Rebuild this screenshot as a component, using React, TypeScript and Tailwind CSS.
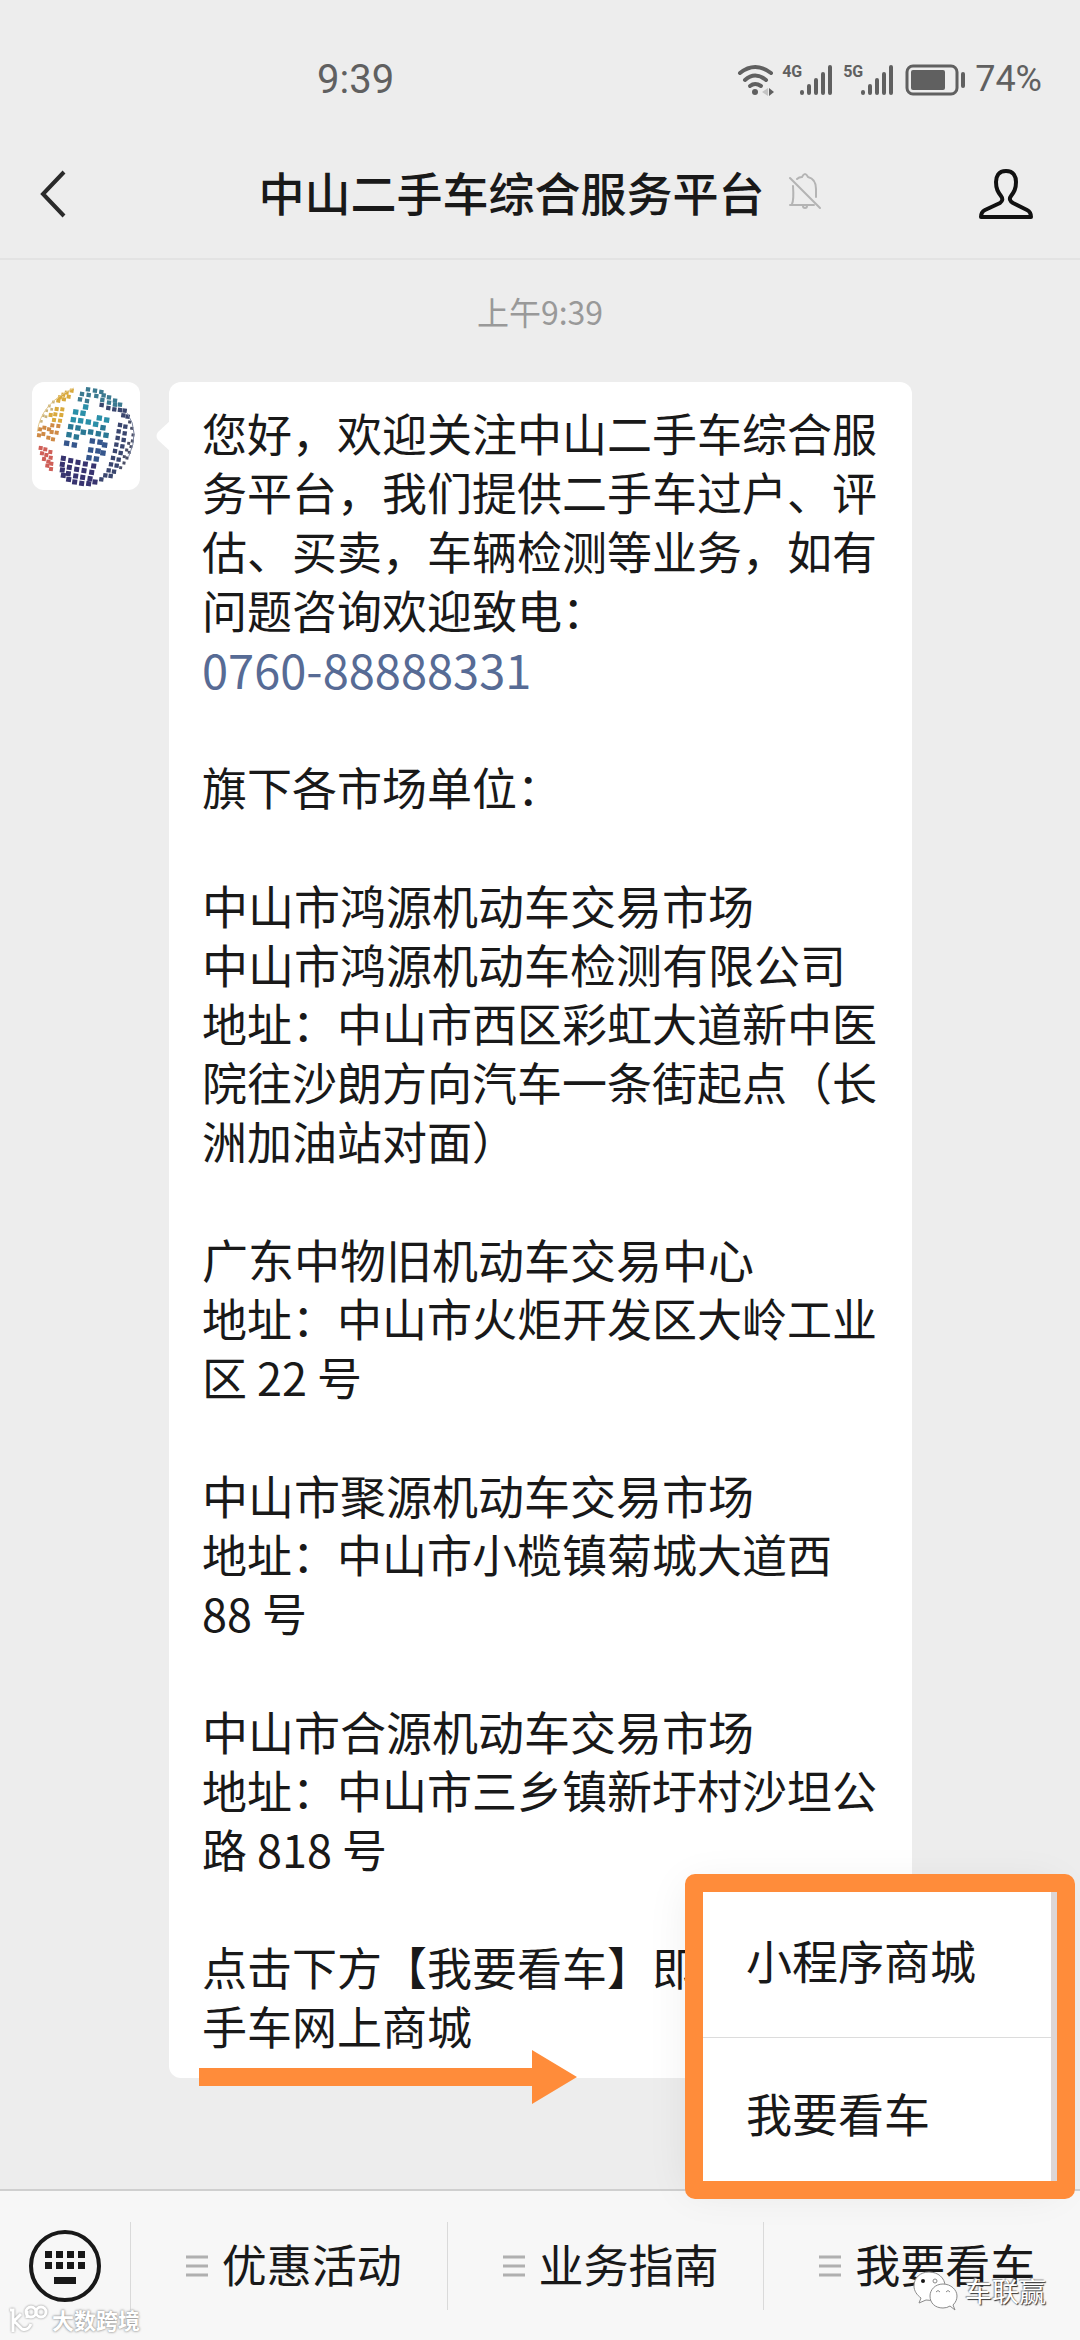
import { Fragment } from 'react'

const markets = [
  {
    names: ['中山市鸿源机动车交易市场', '中山市鸿源机动车检测有限公司'],
    address: '地址：中山市西区彩虹大道新中医\n院往沙朗方向汽车一条街起点（长\n洲加油站对面）',
  },
  {
    names: ['广东中物旧机动车交易中心'],
    address: '地址：中山市火炬开发区大岭工业\n区 22 号',
  },
  {
    names: ['中山市聚源机动车交易市场'],
    address: '地址：中山市小榄镇菊城大道西\n88 号',
  },
  {
    names: ['中山市合源机动车交易市场'],
    address: '地址：中山市三乡镇新圩村沙坦公\n路 818 号',
  },
]

const tabs = ['优惠活动', '业务指南', '我要看车']

const menuItems = ['小程序商城', '我要看车']

// tiles of the globe logo, grouped by colour
const globeTiles = [
  {
    color: '#d9a93c',
    size: 12,
    points: [[215, 92], [200, 98], [206, 110], [190, 104], [180, 112], [192, 118], [175, 122], [187, 148], [170, 147], [184, 165], [166, 163], [180, 182], [162, 180], [152, 165]],
  },
  {
    color: '#cf8a45',
    size: 12,
    points: [[175, 198], [157, 196], [147, 208], [170, 218], [155, 216], [159, 238], [145, 233], [133, 203], [130, 222], [120, 208], [117, 226]],
  },
  {
    color: '#c9b27a',
    size: 8,
    points: [[160, 126], [148, 138], [140, 152], [130, 167], [124, 184], [155, 148], [138, 170]],
  },
  {
    color: '#cf5f58',
    size: 12,
    points: [[122, 264], [136, 268], [151, 276], [126, 280], [139, 285], [152, 293], [132, 297], [145, 305], [154, 311], [142, 317], [153, 327]],
  },
  {
    color: '#3c7a90',
    size: 13,
    points: [[264, 88], [285, 92], [304, 96], [246, 102], [266, 105], [289, 108], [311, 106], [240, 118], [261, 123], [307, 120], [327, 112], [327, 128], [345, 122], [345, 134], [360, 134]],
  },
  {
    color: '#2a8fa8',
    size: 16,
    points: [[257, 141], [227, 156], [249, 160], [220, 179], [242, 182], [265, 186], [298, 174], [320, 180], [287, 193]],
  },
  {
    color: '#2a7894',
    size: 16,
    points: [[212, 200], [234, 204], [250, 217], [272, 216], [295, 221], [309, 203], [207, 224], [229, 231], [318, 226]],
  },
  {
    color: '#35568c',
    size: 16,
    points: [[200, 250], [223, 255], [277, 243], [300, 247], [272, 270], [294, 273], [314, 255], [267, 293], [289, 297], [309, 279]],
  },
  {
    color: '#37336f',
    size: 15,
    points: [[190, 295], [212, 302], [234, 307], [256, 312], [281, 318], [187, 313], [208, 322], [230, 328], [252, 332], [275, 337], [187, 330], [205, 341], [227, 348], [248, 352], [270, 356], [190, 346], [206, 358], [224, 366], [245, 370], [266, 371], [285, 366]],
  },
  {
    color: '#3a466e',
    size: 13,
    points: [[305, 135], [325, 144], [343, 148], [360, 150], [374, 152], [370, 166], [383, 170], [360, 195], [376, 200], [356, 214], [374, 220], [353, 234], [371, 240], [349, 254], [367, 259], [345, 273], [362, 279], [339, 294], [356, 299], [333, 313], [350, 317], [326, 331], [342, 335], [316, 346], [332, 348], [304, 358]],
  },
  {
    color: '#4b4f66',
    size: 9,
    points: [[389, 186], [395, 205], [399, 225], [397, 243], [393, 260], [388, 277], [381, 294], [372, 309], [362, 323], [386, 250], [380, 270], [373, 290]],
  },
]

function GlobeLogo() {
  return (
    <svg viewBox="96 66 324 324" className="size-full" aria-hidden="true">
      <rect x="96" y="66" width="324" height="324" fill="#fff" />
      {globeTiles.map((group) => (
        <g key={group.color} fill={group.color}>
          {group.points.map(([x, y]) => (
            <rect
              key={`${x}-${y}`}
              x={x - group.size / 2}
              y={y - group.size / 2}
              width={group.size}
              height={group.size}
              transform={`rotate(8 ${x} ${y})`}
            />
          ))}
        </g>
      ))}
      <path d="M112 215Q122 130 222 84" fill="none" stroke="#e3c98f" strokeWidth="3" />
      <path d="M382 160Q420 215 386 290" fill="none" stroke="#7c86a0" strokeWidth="3" />
    </svg>
  )
}

function WifiIcon() {
  return (
    <svg viewBox="0 0 38 32" className="h-8 w-[38px]" fill="none" stroke="#606060" strokeWidth="4" strokeLinecap="round" aria-hidden="true">
      <path d="M3 9Q18 -3 34 9" />
      <path d="M8 16Q18 7 29 16" />
      <path d="M13 22Q18 18 24 22" />
      <circle cx="18" cy="28" r="3" fill="#606060" stroke="none" />
      <path d="M31 24v8l-6-4z" fill="#c4c4c4" stroke="none" />
      <path d="M32 24v8l5-4z" fill="#606060" stroke="none" />
    </svg>
  )
}

function Signal({ label }: { label: string }) {
  return (
    <div className="flex h-8 items-start">
      <span className="w-[17px] text-base leading-4 font-bold">{label}</span>
      <svg viewBox="0 0 34 32" className="h-8 w-[34px]" stroke="#606060" strokeWidth="4" strokeLinecap="round" aria-hidden="true">
        <path d="M3 28v1M10 22v7M17 16v13M24 10v19M31 3v26" />
      </svg>
    </div>
  )
}

function StatusBar() {
  return (
    <div className="flex h-[157px] items-start justify-between pt-[58px] pr-[38px] pl-[317px] font-[Roboto,sans-serif] text-[#606060]">
      <time className="text-[40px] leading-[43px]">9:39</time>
      <div className="flex items-center">
        <WifiIcon />
        <div className="ml-[7px] flex gap-[10px]">
          <Signal label="4G" />
          <Signal label="5G" />
        </div>
        <svg viewBox="0 0 62 32" className="ml-[11px] h-8 w-[62px]" aria-hidden="true">
          <rect x="2" y="2" width="50" height="28" rx="6" fill="none" stroke="#606060" strokeWidth="3" />
          <rect x="6" y="6" width="34" height="20" rx="2" fill="#606060" />
          <rect x="56" y="8" width="4" height="16" rx="2" fill="#606060" />
        </svg>
        <span className="ml-2 text-4xl leading-[43px]">74%</span>
      </div>
    </div>
  )
}

function Header() {
  return (
    <header className="border-b-2 border-[#e3e3e3]">
      <StatusBar />
      <div className="flex h-[101px] items-start justify-between pr-[46px] pl-[37px]">
        <button type="button" aria-label="返回" className="mt-3">
          <svg viewBox="0 0 32 50" className="h-[50px] w-8" fill="none" stroke="#2a2a2a" strokeWidth="4">
            <path d="M27 3L6 25l21 22" />
          </svg>
        </button>
        <div className="flex items-center gap-5 pl-9">
          <h1 className="text-[46px] leading-[68px] font-medium text-[#191919]">中山二手车综合服务平台</h1>
          <svg viewBox="0 0 40 38" className="h-[38px] w-10" fill="none" stroke="#b4b4b4" strokeWidth="2" strokeLinejoin="round" strokeLinecap="round" aria-label="消息免打扰">
            <path d="M5 33H29M7 32Q9 28 8 14M12 7Q14 5 17 5Q20 -1 23 5Q31 7 31 17V25" />
            <path d="M5 6L35 36" />
            <path d="M18 34a2 2 0 0 0 4 0" />
          </svg>
        </div>
        <button type="button" aria-label="公众号资料" className="mt-[10px]">
          <svg viewBox="0 0 56 54" className="h-[54px] w-14" fill="none" stroke="#111" strokeWidth="4" strokeLinejoin="round">
            <path d="M28 4C20 4 18 10 18 15C18 22 20 25 23 29Q26 33 22 36L7 43Q3 45 3 50H53Q53 45 49 43L35 36Q30 33 33 29C36 25 38 22 38 15C38 10 36 4 28 4Z" />
          </svg>
        </button>
      </div>
    </header>
  )
}

function Message() {
  return (
    <div className="relative ml-[29px] w-[743px] rounded-xl bg-white pt-[21px] pr-7 pb-[23px] pl-[33px]">
      <svg viewBox="0 0 16 32" className="absolute top-[38px] -left-[14px] h-8 w-4" fill="#fff" aria-hidden="true">
        <path d="M16 0L3 12Q0 16 3 20L16 32Z" />
      </svg>
      <div className="text-[45px] leading-[59px] whitespace-pre text-[#191919]">
        <p>{'您好，欢迎关注中山二手车综合服\n务平台，我们提供二手车过户、评\n估、买卖，车辆检测等业务，如有\n问题咨询欢迎致电：'}</p>
        <a href="tel:0760-88888331" className="block text-[47px] text-[#576b95]">
          0760-88888331
        </a>
        <p className="mt-[59px]">旗下各市场单位：</p>
        {markets.map((market) => (
          <Fragment key={market.names[0]}>
            <div className="mt-[59px] text-[46px]">
              {market.names.map((name) => (
                <p key={name}>{name}</p>
              ))}
            </div>
            <p>{market.address}</p>
          </Fragment>
        ))}
        <p className="mt-[59px]">{'点击下方【我要看车】即\n手车网上商城'}</p>
      </div>
      <svg viewBox="0 0 378 54" className="absolute -bottom-[26px] left-[30px] h-[54px] w-[378px]" fill="#ff8c3a" aria-hidden="true">
        <path d="M0 18H333V0L378 27L333 54V36H0Z" />
      </svg>
    </div>
  )
}

function PopupMenu() {
  return (
    <div className="absolute right-[23px] bottom-[150px] w-[369px]">
      <ul className="divide-y divide-[#dcdcdc] border-r-[6px] border-[#ddd6d6] bg-white shadow-[0_0_40px_rgba(0,0,0,0.08)]">
        {menuItems.map((item) => (
          <li key={item}>
            <button type="button" className="flex h-[152px] w-full items-center pb-1 pl-[58px] text-[46px] text-[#191919]">
              {item}
            </button>
          </li>
        ))}
      </ul>
      {/* highlight frame */}
      <div className="pointer-events-none absolute -top-[11px] -right-[18px] -bottom-[9px] -left-[3px] rounded-[10px] border-[18px] border-[#ff8c3a]" />
    </div>
  )
}

function BottomBar() {
  return (
    <nav className="flex h-[151px] items-center border-t-2 border-[#cfcfcf] bg-[#f7f7f7]">
      <button type="button" aria-label="切换键盘" className="flex w-[130px] shrink-0 justify-center">
        <svg viewBox="0 0 76 76" className="size-[76px]" fill="#191919">
          <circle cx="38" cy="38" r="34" fill="none" stroke="#191919" strokeWidth="4" />
          {[18, 29, 40, 51].map((x) => (
            <Fragment key={x}>
              <rect x={x} y="23" width="7" height="7" />
              <rect x={x} y="34" width="7" height="7" />
            </Fragment>
          ))}
          <rect x="27" y="49" width="22" height="7" />
        </svg>
      </button>
      {tabs.map((tab) => (
        <button
          key={tab}
          type="button"
          className="flex h-[88px] flex-1 items-center justify-center gap-[14px] border-l border-[#dadada] pl-[10px] text-[45px] text-[#191919]"
        >
          <svg viewBox="0 0 22 22" className="size-[22px]" stroke="#b0b0b0" strokeWidth="3" aria-hidden="true">
            <path d="M0 2H22M0 11H22M0 20H22" />
          </svg>
          <span className="pb-1">{tab}</span>
        </button>
      ))}
    </nav>
  )
}

function Watermarks() {
  return (
    <>
      <div className="pointer-events-none absolute bottom-[6px] left-2 flex items-center gap-1 text-white">
        <svg viewBox="0 0 40 30" className="h-[30px] w-10 drop-shadow-[0_0_1px_#888]" fill="none" stroke="#fff" strokeWidth="3" aria-hidden="true">
          <path d="M2 6H5V28M23 20Q20 27 14 25L6 17L13 10M19 14V7" />
          <circle cx="23" cy="8" r="5" />
          <circle cx="33" cy="8" r="5" />
        </svg>
        <span className="text-[22px] leading-[30px] font-bold [text-shadow:0_0_2px_#888,0_0_3px_#aaa]">大数跨境</span>
      </div>
      <div className="pointer-events-none absolute right-[34px] bottom-[28px] flex items-center gap-[6px] text-white">
        <svg viewBox="0 0 46 42" className="h-[42px] w-[46px]" fill="#fff" stroke="#8a8a8a" strokeWidth="1" aria-hidden="true">
          <path d="M16 2C7 2 1 8 1 16C1 21 4 25 8 28L6 33L13 30C24 32 32 25 32 16C32 8 25 2 16 2Z" />
          <circle cx="10" cy="11" r="2" fill="#191919" stroke="none" />
          <circle cx="22" cy="11" r="2" fill="#fff" />
          <path d="M30 14C22 14 17 20 17 26C17 33 22 38 30 38Q34 38 37 36L42 40L40 35C43 32 44 29 44 26C44 20 38 14 30 14Z" />
          <path d="M23 22Q25 19 27 22M33 22Q35 19 37 22" fill="none" />
        </svg>
        <span className="text-[27px] leading-9 [text-shadow:1px_1px_1px_#333,-1px_-1px_1px_#999]">车联赢</span>
      </div>
    </>
  )
}

export default function App() {
  return (
    <div className="relative flex min-h-screen flex-col bg-[#ededed] font-['Noto_Sans_CJK_SC',sans-serif]">
      <Header />
      <main className="flex-1 px-8">
        <time className="block pt-[27px] text-center text-[32px] leading-[48px] text-[#999]">上午9:39</time>
        <div className="mt-[47px] flex items-start">
          <div className="size-[108px] shrink-0 overflow-hidden rounded-xl">
            <GlobeLogo />
          </div>
          <Message />
        </div>
      </main>
      <BottomBar />
      <PopupMenu />
      <Watermarks />
    </div>
  )
}
